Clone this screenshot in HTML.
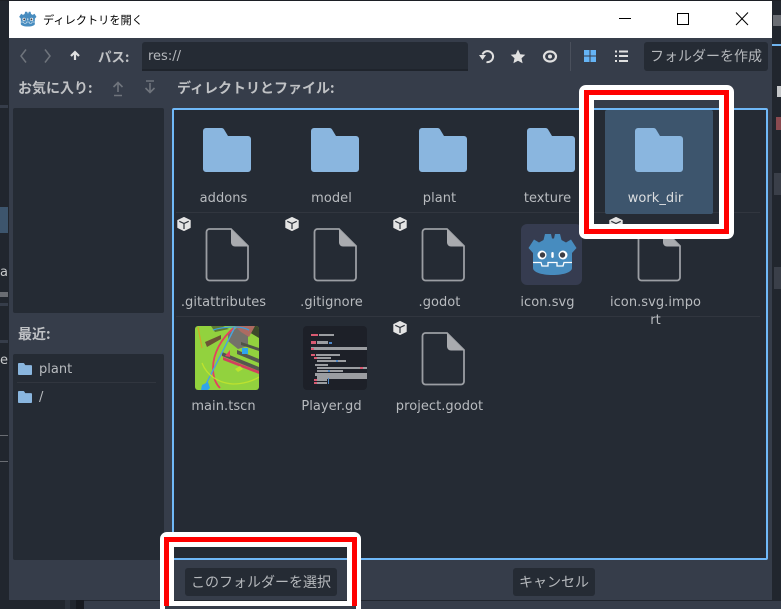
<!DOCTYPE html>
<html lang="ja"><head><meta charset="utf-8"><title>ディレクトリを開く</title>
<style>
html,body{margin:0;padding:0;width:781px;height:609px;overflow:hidden;background:#21262e}
body{position:relative;font-family:"DejaVu Sans","Noto Sans CJK JP",sans-serif;font-size:13px;color:#b8bbbf}
.a,.t,.l,svg.a{position:absolute}
.t{white-space:nowrap;line-height:18px}
.l{white-space:nowrap;line-height:18px;width:108px;text-align:center;letter-spacing:.05px}
.b{font-family:"Noto Sans CJK JP","Liberation Sans",sans-serif;font-size:14px}
.btn{position:absolute;background:#252b34;border-radius:3px;text-align:center;line-height:28px;font-family:"Noto Sans CJK JP","Liberation Sans",sans-serif;font-size:14px;color:#b5b8bc;white-space:nowrap}
.sep{position:absolute;height:1px;background:#31363f}
</style></head><body>
<svg width="0" height="0" style="position:absolute">
<defs>
<path id="fo" d="M3 0H18.500a3 3 0 0 1 2.600 1.500L25 8H45a3 3 0 0 1 3 3V41a3 3 0 0 1-3 3H3a3 3 0 0 1-3-3V3a3 3 0 0 1 3-3z" fill="#8ab6df"/>
<g id="fi"><path d="M4.500 1H26L43 18V49.500a3 3 0 0 1-3 3H4.500a3 3 0 0 1-3-3V4a3 3 0 0 1 3-3z" fill="none" stroke="#9b9ea3" stroke-width="1.800"/><path d="M26 1L43.500 18.500H30a4 4 0 0 1-4-4z" fill="#a9abaf"/></g>
<g id="cu"><path d="M7 .5L13.200 3.500V10.500L7 13.500L.8 10.500V3.500z" fill="#e4e4e4" stroke="#e4e4e4" stroke-linejoin="round"/><path d="M2.300 4.300L7 6.500L11.700 4.300M7 6.500V12" fill="none" stroke="#2b3038" stroke-width="1.200"/></g>
<g id="go">
<path d="M12 38V29L7.500 24L13 15.500L18 18.500L22.500 16L24 10H30L31 14.500H33L34 10H39L40.500 16L45 18.500L50 15.500L55.500 24L51 29V38z" fill="#478cbf"/>
<path d="M12 38V44C12 48 20 51 31.500 51C43 51 51 48 51 44V38z" fill="#478cbf"/>
<path d="M12 38.500H20L21 42H27V38.500H36V42H42L43 38.500H51" fill="none" stroke="#fff" stroke-width="1.300"/>
<circle cx="21" cy="31" r="4.500" fill="#fff"/><circle cx="42" cy="31" r="4.500" fill="#fff"/>
<circle cx="21.500" cy="31" r="2.700" fill="#3d3d44"/><circle cx="41.500" cy="31" r="2.700" fill="#3d3d44"/>
<rect x="30.300" y="28" width="2.400" height="6" rx="1.200" fill="#fff"/>
</g>
</defs></svg>

<!-- background strips -->
<div class="a" style="left:0;top:0;width:781px;height:1px;background:#1c1f25"></div>
<div class="a" style="left:0;top:207px;width:8px;height:26px;background:#3d556d"></div>
<div class="a" style="left:0;top:292px;width:8px;height:5px;background:#6a6d73"></div>
<div class="a" style="left:0;top:303px;width:8px;height:3px;background:#363d4a"></div>
<div class="a" style="left:0;top:340px;width:8px;height:3px;background:#363d4a"></div>
<div class="a" style="left:0;top:105px;width:8px;height:3px;background:#363d4a"></div>
<div class="a" style="left:0;top:435px;width:8px;height:1px;background:#6a6d73"></div>
<div class="a" style="left:0;top:461px;width:8px;height:1px;background:#6a6d73"></div>
<div class="t" style="left:0;top:264px;color:#c6c8ca;width:8px;overflow:hidden">a</div>
<div class="t" style="left:0;top:352px;color:#c6c8ca;width:8px;overflow:hidden">e</div>
<div class="a" style="left:773px;top:15px;width:8px;height:11px;background:#6a6d73"></div>
<div class="a" style="left:772px;top:44px;width:9px;height:2px;background:#70b4ee"></div>
<div class="a" style="left:777px;top:86px;width:4px;height:11px;background:#c4c6c8"></div>
<div class="a" style="left:776px;top:117px;width:5px;height:13px;background:#8a4a50"></div>
<div class="a" style="left:774px;top:173px;width:7px;height:22px;background:#3a3f49"></div>
<div class="a" style="left:774px;top:267px;width:7px;height:22px;background:#3a3f49"></div>
<div class="a" style="left:65px;top:600px;width:5px;height:9px;background:#2c323c"></div>
<div class="a" style="left:76px;top:600px;width:8px;height:9px;background:#171a20"></div>
<div class="a" style="left:84px;top:601px;width:697px;height:8px;background:#363d4a"></div>

<!-- window -->
<div class="a" style="left:9px;top:38px;width:763px;height:562px;background:#363d4a"></div>
<div class="a" style="left:9px;top:1px;width:763px;height:37px;background:#fff"></div>
<svg class="a" style="left:19px;top:10px" width="18" height="18" viewBox="7 5 50 50"><use href="#go"/></svg>
<div class="t" style="left:43px;top:11px;font-size:11.200px;color:#000;font-family:'Noto Sans CJK JP',sans-serif">ディレクトリを開く</div>
<svg class="a" style="left:610px;top:8px" width="160" height="24" fill="none" stroke="#000" stroke-width="1"><path d="M9 10.500H21"/><rect x="67.500" y="5.500" width="11" height="11"/><path d="M126 4.500L138 17M138 4.500L126 17"/></svg>

<!-- toolbar -->
<svg class="a" style="left:15px;top:46px" width="70" height="20" fill="none" stroke="#6f747c" stroke-width="1.500"><path d="M11 3.500L6 10L11 16.500M30 3.500L35 10L30 16.500"/><path d="M60 14V6M56 10L60 6L64 10" stroke="#e0e0e0" stroke-width="2.200"/></svg>
<div class="t b" style="left:98px;top:47px;font-weight:700;color:#c0c2c5;font-size:13.500px">パス:</div>
<div class="a" style="left:142px;top:42px;width:326px;height:29px;background:#252b34;border-radius:3px 3px 0 0;border-bottom:2px solid #1f242c;box-sizing:border-box"></div>
<div class="t" style="left:148px;top:48px;color:#b5b8bc">res://</div>
<svg class="a" style="left:478px;top:47px" width="150" height="20">
<path d="M8.500 15A5.500 5.500 0 1 0 4.500 7.500" fill="none" stroke="#e0e0e0" stroke-width="2"/><path d="M1 8H8L4.500 13z" fill="#e0e0e0"/>
<path d="M40 2.500L42.200 7.300L47.300 7.800L43.500 11.200L44.600 16.200L40 13.700L35.400 16.200L36.500 11.200L32.700 7.800L37.800 7.300z" fill="#e0e0e0"/>
<ellipse cx="72" cy="9.500" rx="6" ry="5" fill="none" stroke="#e0e0e0" stroke-width="2.200"/><circle cx="72" cy="9.500" r="2" fill="#e0e0e0"/>
</svg>
<div class="a" style="left:569.500px;top:42px;width:1px;height:29px;background:#4a505c"></div>
<svg class="a" style="left:584px;top:50px" width="48" height="13"><g fill="#65b4f5"><rect width="5.500" height="5.500"/><rect x="6.500" width="5.500" height="5.500"/><rect y="6.500" width="5.500" height="5.500"/><rect x="6.500" y="6.500" width="5.500" height="5.500"/></g><g fill="#e0e0e0"><rect x="31" y=".5" width="2" height="2"/><rect x="35" y=".5" width="9" height="2"/><rect x="31" y="5" width="2" height="2"/><rect x="35" y="5" width="9" height="2"/><rect x="31" y="10" width="2" height="2"/><rect x="35" y="10" width="9" height="2"/></g></svg>
<div class="btn" style="left:644px;top:42px;width:124px;height:29px">フォルダーを作成</div>

<!-- section labels -->
<div class="t b" style="left:18px;top:79px;font-weight:700;color:#c0c2c5">お気に入り:</div>
<svg class="a" style="left:110px;top:80px" width="50" height="18" fill="none" stroke="#6f747c" stroke-width="1.600"><path d="M8 12V2.500M3.500 7L8 2.500L12.500 7M4 15.500H12M40 3V12.500M35.500 8L40 12.500L44.500 8M36 1H44"/></svg>
<div class="t b" style="left:177px;top:79px;font-weight:700;color:#c0c2c5">ディレクトリとファイル:</div>
<div class="a" style="left:13px;top:108px;width:151px;height:205px;background:#252b34;border-radius:2px"></div>
<div class="t b" style="left:18px;top:325px;font-weight:700;color:#c0c2c5">最近:</div>
<div class="a" style="left:13px;top:354px;width:151px;height:206px;background:#252b34;border-radius:2px"></div>
<svg class="a" style="left:18px;top:363px" width="14" height="12" viewBox="0 0 48 44" preserveAspectRatio="none"><use href="#fo"/></svg>
<div class="t" style="left:39px;top:361px">plant</div>
<div class="sep" style="left:17px;top:382px;width:139px"></div>
<svg class="a" style="left:18px;top:391px" width="14" height="12" viewBox="0 0 48 44" preserveAspectRatio="none"><use href="#fo"/></svg>
<div class="t" style="left:39px;top:389px">/</div>

<!-- main panel -->
<div class="a" style="left:172px;top:108px;width:596px;height:452px;box-sizing:border-box;background:#252b34;border:2px solid #70b9f8;border-radius:2px"></div>
<div class="sep" style="left:176px;top:212px;width:584px"></div>
<div class="sep" style="left:176px;top:316px;width:584px"></div>
<div class="a" style="left:605px;top:110px;width:108px;height:104px;background:#3d556d;border-radius:2px"></div>

<svg class="a" style="left:203px;top:128px" width="48" height="44"><use href="#fo"/></svg>
<svg class="a" style="left:311px;top:128px" width="48" height="44"><use href="#fo"/></svg>
<svg class="a" style="left:419px;top:128px" width="48" height="44"><use href="#fo"/></svg>
<svg class="a" style="left:527px;top:128px" width="48" height="44"><use href="#fo"/></svg>
<svg class="a" style="left:635px;top:128px" width="48" height="44"><use href="#fo"/></svg>
<div class="l" style="left:169.500px;top:190px">addons</div>
<div class="l" style="left:277.500px;top:190px">model</div>
<div class="l" style="left:385.500px;top:190px">plant</div>
<div class="l" style="left:493.500px;top:190px">texture</div>
<div class="l" style="left:601.500px;top:190px;color:#dcdee0">work_dir</div>

<svg class="a" style="left:205px;top:228px" width="45" height="54"><use href="#fi"/></svg>
<svg class="a" style="left:313px;top:228px" width="45" height="54"><use href="#fi"/></svg>
<svg class="a" style="left:421px;top:228px" width="45" height="54"><use href="#fi"/></svg>
<svg class="a" style="left:637px;top:228px" width="45" height="54"><use href="#fi"/></svg>
<svg class="a" style="left:421px;top:332px" width="45" height="54"><use href="#fi"/></svg>
<svg class="a" style="left:177px;top:217px" width="14" height="14"><use href="#cu"/></svg>
<svg class="a" style="left:285px;top:217px" width="14" height="14"><use href="#cu"/></svg>
<svg class="a" style="left:393px;top:217px" width="14" height="14"><use href="#cu"/></svg>
<svg class="a" style="left:609px;top:217px" width="14" height="14"><use href="#cu"/></svg>
<svg class="a" style="left:393px;top:321px" width="14" height="14"><use href="#cu"/></svg>

<div class="a" style="left:521px;top:224px;width:61px;height:61px;background:#363c50;border-radius:6px"></div>
<svg class="a" style="left:521px;top:224px" width="61" height="61"><use href="#go"/></svg>

<div class="l" style="left:169.500px;top:294px">.gitattributes</div>
<div class="l" style="left:277.500px;top:294px">.gitignore</div>
<div class="l" style="left:385.500px;top:294px">.godot</div>
<div class="l" style="left:493.500px;top:294px">icon.svg</div>
<div class="l" style="left:601.500px;top:294px">icon.svg.impo</div>
<div class="l" style="left:601.500px;top:312px">rt</div>

<!-- main.tscn thumb -->
<svg class="a" style="left:195px;top:326px" width="64" height="64" viewBox="0 0 64 64">
<defs><clipPath id="c1"><rect width="64" height="64" rx="3"/></clipPath></defs>
<g clip-path="url(#c1)">
<rect width="64" height="64" fill="#92d23e"/>
<path d="M48 0H64V12L54 6z" fill="#3c4a2a"/>
<path d="M16 0H28L34 3L20 6z" fill="#5d7a34"/>
<path d="M33 8L43 1L53 8V20L43 23L33 15z" fill="#74716a"/>
<path d="M40 0H60L54 11L46 6z" fill="#ad6b62"/>
<path d="M10 16L26 9V13L12 21z" fill="#6c5436"/>
<path d="M27 26L64 41V45L27 30z" fill="#55564f"/>
<path d="M28 31L64 45V48L28 34z" fill="#d23f5e"/>
<path d="M42 24L64 33V37L42 28z" fill="#54574f"/>
<path d="M46 16L64 22V25L46 19z" fill="#4f5548"/>
<path d="M40 1C26 12 18 28 18 42C18 50 20 57 25 62" fill="none" stroke="#e5405f" stroke-width="1.800"/>
<path d="M18 4C24 2 32 1 40 1C46 1 50 2 54 4" fill="none" stroke="#3f9edb" stroke-width="1.300"/>
<path d="M40 1L9 62" stroke="#4aa3e0" stroke-width="1.400"/>
<path d="M3 1L7 22" stroke="#d2a32a" stroke-width="1.200"/>
<path d="M7 37C12 50 24 57 38 58C48 58 58 55 64 51" fill="none" stroke="#bde22e" stroke-width="1.300"/>
<path d="M7 59L13 56L15 62L13 64H6z" fill="#31a5ea"/>
<rect x="47" y="22" width="6" height="6" fill="#2ea6ee"/>
<path d="M30 30L35 24V31z" fill="#e5405f"/>
<path d="M40 43L45 40L48 43L43 46z" fill="#bde22e"/>
</g></svg>

<!-- Player.gd thumb -->
<svg class="a" style="left:303px;top:326px" width="64" height="64" viewBox="0 0 64 64">
<rect width="64" height="64" rx="4" fill="#1d2028"/>
<g fill="#9b9da1">
<rect x="16" y="8" width="15" height="2"/><rect x="14" y="15" width="11" height="3"/><rect x="8" y="21" width="56" height="3"/>
<rect x="13" y="28" width="24" height="2"/><rect x="12" y="31" width="16" height="2"/><rect x="14" y="34" width="29" height="2"/>
<rect x="12" y="38" width="13" height="2"/><rect x="14" y="41" width="50" height="2"/><rect x="14" y="44" width="26" height="2"/>
<rect x="12" y="47" width="52" height="3"/><rect x="14" y="50" width="50" height="3"/><rect x="14" y="53" width="10" height="2"/><rect x="14" y="56" width="10" height="2"/>
</g>
<g fill="#d95a72"><rect x="8" y="8" width="7" height="2"/><rect x="8" y="15" width="5" height="3"/><rect x="8" y="22" width="3" height="2"/><rect x="8" y="28" width="4" height="2"/><rect x="11" y="31" width="3" height="2"/><rect x="57" y="41" width="3" height="2"/><rect x="11" y="53" width="3" height="2"/><rect x="11" y="56" width="3" height="2"/></g>
<g fill="#4d86c8"><rect x="26" y="16" width="3" height="2"/><rect x="33" y="34" width="2" height="2"/><rect x="25" y="44" width="2" height="2"/><rect x="25" y="52" width="1" height="6"/></g>
</svg>

<div class="l" style="left:169.500px;top:398px">main.tscn</div>
<div class="l" style="left:277.500px;top:398px">Player.gd</div>
<div class="l" style="left:385.500px;top:398px">project.godot</div>

<!-- buttons -->
<div class="btn" style="left:185px;top:568px;width:152px;height:28px">このフォルダーを選択</div>
<div class="btn" style="left:513px;top:568px;width:82px;height:28px">キャンセル</div>

<!-- annotation overlays -->
<div class="a" style="left:579px;top:85px;width:155px;height:154px;box-sizing:border-box;border:5px solid #fff;border-radius:7px"></div>
<div class="a" style="left:584px;top:90px;width:145px;height:144px;box-sizing:border-box;border:5px solid #f00"></div>
<div class="a" style="left:589px;top:95px;width:135px;height:134px;box-sizing:border-box;border:5px solid #fff"></div>
<div class="a" style="left:160px;top:532px;width:201px;height:90px;box-sizing:border-box;border:5px solid #fff;border-radius:7px"></div>
<div class="a" style="left:164px;top:537px;width:193px;height:69px;box-sizing:border-box;border:5px solid #f00;border-bottom-width:4px"></div>
<div class="a" style="left:169px;top:542px;width:183px;height:64px;box-sizing:border-box;border:5px solid #fff"></div>
</body></html>
